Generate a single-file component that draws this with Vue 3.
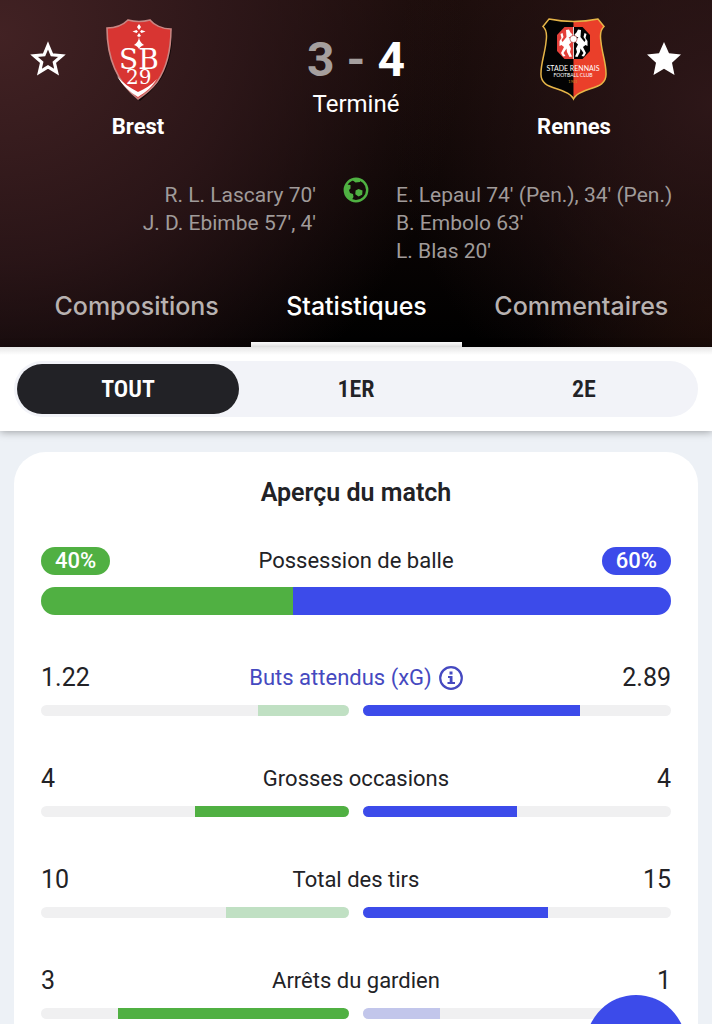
<template>
  <div class="page">
    <header class="match-header">
      <div class="scoreboard">
        <button class="star" type="button" aria-label="Suivre Brest">
          <svg width="36" height="36" viewBox="0 0 36 36">
            <path
              d="M18 4.500l3.900 9.300 10 .9-7.600 6.600 2.300 9.800-8.600-5.200-8.600 5.200 2.300-9.800-7.600-6.600 10-.9z"
              fill="none"
              stroke="#fff"
              stroke-width="3.200"
            />
          </svg>
        </button>

        <div class="team">
          <svg class="crest" width="68" height="84" viewBox="0 0 68 84">
            <path d="M4 13C12 12 20 9 24 4q11 3 22 0c5 5 13 9 22 10 1 19-4 39-14 52q-8 10-18 18C15 67 3 43 4 13z" fill="#120808" />
            <path d="M3 11C11 11 19 8 24 3q11 3 22 0c4 5 12 9 21 9 0 21-5 40-14 53-6 8-13 13-19 17C13 65 3 42 3 11z" fill="#d83532" stroke="#c98582" stroke-width="1.600" />
            <path d="M13 59c5 9 13 16 21 21 8-5 14-10 19-18-6 6-12 10-19 13-8-4-15-9-21-16z" fill="#fff" />
            <path d="M35 7l2 3-2 3-2-3zM28.500 14.500l4-1.500 1.500 1.500-1.500 1.500zM41.500 14.500l-4-1.500-1.500 1.500 1.500 1.500zM33 19l2-3 2 3-2 1zM35 20c.5 4 2 6 5 8-3 1-4 2-5 4-1-2-2-3-5-4 3-2 4.500-4 5-8z" fill="#fff" />
            <text class="brest-letters">
              <tspan x="15" y="52">SB</tspan>
              <tspan x="22" y="67" class="brest-number">29</tspan>
            </text>
          </svg>
          <span class="team-name">Brest</span>
        </div>

        <div class="score">
          <p class="result"><span class="muted">3 -</span> 4</p>
          <p class="status">Terminé</p>
        </div>

        <div class="team">
          <svg class="crest" width="68" height="84" viewBox="0 0 68 84">
            <defs>
              <clipPath id="shield">
                <path :d="shieldPath" />
              </clipPath>
            </defs>
            <g clip-path="url(#shield)">
              <path d="M0 0h33.500v84H0z" fill="#030303" />
              <path d="M33.500 0H68v84H33.500z" fill="#ea3f2a" />
            </g>
            <path :d="shieldPath" fill="none" stroke="#e6b548" stroke-width="1.500" />
            <path d="M33.500 10h-9L17 18v16l7.500 8h9z" fill="#e4403a" />
            <path d="M33.500 10h9l7.500 8v16l-7.500 8h-9z" fill="#030303" />
            <path d="M33.500 10v32" stroke="#fff" stroke-width="0.800" />
            <path :d="ermine" fill="#fff" />
            <path :d="ermine" fill="#fff" transform="matrix(-1 0 0 1 67 0)" />
            <circle cx="33.500" cy="22" r="3.600" fill="#fff" stroke="#a33" stroke-width="0.600" />
            <text x="33" y="54" class="rennes-title">STADE RENNAIS</text>
            <text x="33" y="60" class="rennes-sub">FOOTBALL CLUB</text>
            <text x="33" y="66" class="rennes-year">1901</text>
          </svg>
          <span class="team-name">Rennes</span>
        </div>

        <button class="star" type="button" aria-label="Suivre Rennes">
          <svg width="36" height="36" viewBox="0 0 36 36">
            <path d="M18 1l5 11.300 12 1.200-9 8.200 2.500 12.300L18 27.700 7.500 34 10 21.700 1 13.500l12-1.200z" fill="#fff" />
          </svg>
        </button>
      </div>

      <div class="scorers">
        <ul class="home">
          <li v-for="scorer in homeScorers" :key="scorer">{{ scorer }}</li>
        </ul>
        <svg class="ball" width="26" height="26" viewBox="0 0 26 26">
          <circle cx="13" cy="13" r="11.200" fill="none" stroke="#4fb142" stroke-width="2.400" />
          <path d="M3 7.500l4.500.5v3.500L6 13l1 3 3 1 .5 3-1.500 2.500L4 20l-2-6zM8.500 2.500l4 3 4.500-.5 1-2.500-4-1zM15.500 12l4 1.500-.3 4.200-3.700 1.800-3.200-2.300.3-3.700z" fill="#4fb142" />
        </svg>
        <ul class="away">
          <li v-for="scorer in awayScorers" :key="scorer">{{ scorer }}</li>
        </ul>
      </div>

      <nav class="tabs">
        <a
          v-for="tab in tabs"
          :key="tab"
          href="#"
          :class="{ active: tab === activeTab }"
          @click.prevent="activeTab = tab"
        >{{ tab }}</a>
      </nav>
    </header>

    <div class="period-bar">
      <div class="periods">
        <button
          v-for="period in periods"
          :key="period"
          type="button"
          :class="{ active: period === activePeriod }"
          @click="activePeriod = period"
        >{{ period }}</button>
      </div>
    </div>

    <main>
      <section class="card">
        <h2>Aperçu du match</h2>

        <div class="stat possession">
          <div class="stat-head">
            <span class="badge green">40%</span>
            <span class="label">Possession de balle</span>
            <span class="badge blue">60%</span>
          </div>
          <div class="split">
            <div class="green" :style="{ width: '40%' }"></div>
            <div class="blue" :style="{ width: '60%' }"></div>
          </div>
        </div>

        <div v-for="stat in stats" :key="stat.label" class="stat">
          <div class="stat-head">
            <span class="value">{{ stat.home }}</span>
            <button v-if="stat.info" type="button" class="label info">
              {{ stat.label }}
              <svg width="24" height="24" viewBox="0 0 24 24">
                <circle cx="12" cy="12" r="10.800" fill="none" stroke="currentColor" stroke-width="2.200" />
                <path d="M10.500 5.500h3v3h-3zM9 10h4.500v6H16v2H8.500v-2h2.200v-4H9z" fill="currentColor" />
              </svg>
            </button>
            <span v-else class="label">{{ stat.label }}</span>
            <span class="value end">{{ stat.away }}</span>
          </div>
          <div class="bars">
            <div class="bar left">
              <div
                class="green"
                :class="{ faded: stat.home < stat.away }"
                :style="{ width: share(stat.home, stat) }"
              ></div>
            </div>
            <div class="bar">
              <div
                class="blue"
                :class="{ faded: stat.away < stat.home }"
                :style="{ width: share(stat.away, stat) }"
              ></div>
            </div>
          </div>
        </div>
      </section>
    </main>

    <button class="fab" type="button" aria-label="Actions"></button>
  </div>
</template>

<script setup>
import { ref } from "vue";

const tabs = ["Compositions", "Statistiques", "Commentaires"];
const activeTab = ref("Statistiques");

const periods = ["TOUT", "1ER", "2E"];
const activePeriod = ref("TOUT");

const homeScorers = ["R. L. Lascary 70'", "J. D. Ebimbe 57', 4'"];
const awayScorers = ["E. Lepaul 74' (Pen.), 34' (Pen.)", "B. Embolo 63'", "L. Blas 20'"];

const stats = [
  { label: "Buts attendus (xG)", home: 1.22, away: 2.89, info: true },
  { label: "Grosses occasions", home: 4, away: 4 },
  { label: "Total des tirs", home: 10, away: 15 },
  { label: "Arrêts du gardien", home: 3, away: 1 },
];

const share = (value, stat) => `${(value / (stat.home + stat.away)) * 100}%`;

// Rennes crest
const shieldPath =
  "M9 2Q33.500 7 58 2L64 9.500C60 13 60 19 61 25C62 36 66 46 66 56C67 70 52 70 42 75C37 77 35 79 33.500 82C32 79 30 77 25 75C15 70 0 70 1 56C1 46 5 36 6 25C7 19 7 13 3 9.500Z";
const ermine =
  "M26 13l3-.5 1.500 3 2 2-1 2-3 1 3 2-.5 3-2 2 2 4-1 3.500 2 4.500-2.500.5-2.500-5-.5-3.500-3 4.500 2 3-2.500.5-2-3.500 3-6-2.500-2-2 1 0-5 2-3-1-4 2-1 1 4-2 3 1 2 4-5z";
</script>

<style>
body {
  margin: 0;
}
</style>

<style scoped>
.page {
  display: flex;
  flex-direction: column;
  min-height: 100vh;
  background: #edf1f6;
  color: #222226;
  font-family: Roboto, "Noto Sans", sans-serif;
}

ul,
p,
h2 {
  margin: 0;
  padding: 0;
  list-style: none;
}

button {
  padding: 0;
  border: 0;
  background: none;
  color: inherit;
  font: inherit;
  cursor: pointer;
}

.match-header {
  background:
    radial-gradient(ellipse 65% 130% at 0% 10%, rgba(68, 35, 37, 0.95), rgba(50, 25, 28, 0.8) 50%, transparent),
    radial-gradient(ellipse 45% 100% at 100% 30%, rgba(48, 24, 26, 0.9), transparent),
    radial-gradient(ellipse 25% 60% at 100% 90%, #140802, transparent),
    linear-gradient(#1a0c0a, #000);
  color: #fff;
}

.scoreboard {
  display: grid;
  grid-template-columns: 96px 84px 1fr 84px 96px;
  padding-top: 17px;
}

.star {
  height: 84px;
}

.star svg {
  display: block;
  margin: auto;
}

.team {
  display: flex;
  flex-direction: column;
  align-items: center;
  gap: 12px;
}

.team-name {
  font-size: 22px;
  line-height: 28px;
  font-weight: 700;
}

.brest-letters {
  fill: #fff;
  font: 28px "DejaVu Serif", serif;
}

.brest-number {
  font-size: 20px;
}

.rennes-title,
.rennes-sub,
.rennes-year {
  fill: #fff;
  font: 7px Lato, sans-serif;
  text-anchor: middle;
}

.rennes-sub {
  font-size: 5px;
}

.rennes-year {
  fill: #c9872b;
  font-size: 4px;
}

.score {
  display: flex;
  flex-direction: column;
  align-items: center;
  padding-top: 19px;
}

.result {
  font-size: 48px;
  line-height: 48px;
  font-weight: 700;
}

.muted {
  color: #a59f9e;
}

.status {
  font-size: 24px;
  line-height: 40px;
}

.scorers {
  display: grid;
  grid-template-columns: 1fr 80px 1fr;
  min-height: 84px;
  padding-top: 36px;
  color: #a09b9a;
  font-size: 21px;
  line-height: 28px;
}

.home {
  padding-top: 4px;
  text-align: right;
}

.away {
  padding-top: 4px;
}

.ball {
  justify-self: center;
}

.tabs {
  display: grid;
  grid-template-columns: 229fr 210fr 239fr;
  padding: 11px 11px 0 22px;
}

.tabs a {
  padding: 12px 0 18px;
  border-bottom: 5px solid transparent;
  color: #b8b2b1;
  font-family: Inter, sans-serif;
  font-size: 25px;
  line-height: 36px;
  font-weight: 500;
  text-align: center;
  text-decoration: none;
}

.tabs a.active {
  border-color: #fff;
  color: #fff;
}

.period-bar {
  position: relative;
  padding: 14px;
  background: linear-gradient(#e6e6e6, #fff 8px);
  box-shadow: 0 1px 8px rgba(0, 0, 0, 0.35);
}

.periods {
  display: flex;
  border-radius: 28px;
  background: #f2f3f8;
}

.periods button {
  flex: 1;
  height: 50px;
  margin: 3px;
  border-radius: 25px;
  font-family: "Roboto Condensed", "Liberation Sans Narrow", Roboto, sans-serif;
  font-size: 24px;
  font-weight: 600;
}

.periods .active {
  background: #222226;
  color: #fff;
}

main {
  display: flex;
  flex: 1;
  padding: 21px 14px 0;
}

.card {
  flex: 1;
  padding: 25px 27px 4px;
  border-radius: 32px 32px 0 0;
  background: #fff;
}

h2 {
  margin-bottom: 38px;
  font-size: 25px;
  line-height: 32px;
  font-weight: 600;
  text-align: center;
}

.stat + .stat {
  margin-top: 49px;
}

.stat-head {
  display: grid;
  grid-template-columns: 1fr auto 1fr;
  align-items: center;
  height: 28px;
  margin-bottom: 13px;
}

.possession .stat-head {
  margin-bottom: 12px;
}

.label {
  font-size: 22px;
  line-height: 28px;
}

.info {
  display: flex;
  align-items: center;
  gap: 7px;
  color: #4549c0;
}

.value {
  font-size: 25px;
  line-height: 28px;
}

.end {
  text-align: right;
}

.badge {
  padding: 0 14px;
  border-radius: 14px;
  color: #fff;
  font-size: 22px;
  line-height: 28px;
  font-weight: 500;
  justify-self: start;
}

.badge.blue {
  justify-self: end;
}

.green {
  background: #50b042;
}

.blue {
  background: #3c4bea;
}

.split {
  display: flex;
  height: 28px;
  overflow: hidden;
  border-radius: 14px;
}

.bars {
  display: grid;
  grid-template-columns: 1fr 1fr;
  gap: 14px;
}

.bar {
  display: flex;
  height: 11px;
  overflow: hidden;
  border-radius: 6px;
  background: #f0f0f1;
}

.bar.left {
  justify-content: flex-end;
}

.green.faded {
  background: #c0e0c3;
}

.blue.faded {
  background: #c2c6eb;
}

.fab {
  position: fixed;
  right: 26px;
  bottom: -71px;
  width: 100px;
  height: 100px;
  border-radius: 50%;
  background: #3c4bea;
}
</style>
